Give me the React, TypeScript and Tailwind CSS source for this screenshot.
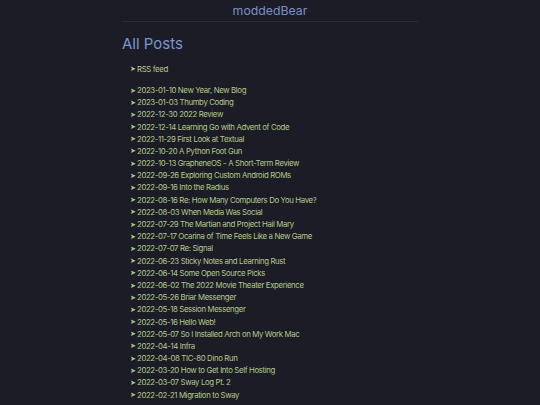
const posts = [
  '2023-01-10 New Year, New Blog',
  '2023-01-03 Thumby Coding',
  '2022-12-30 2022 Review',
  '2022-12-14 Learning Go with Advent of Code',
  '2022-11-29 First Look at Textual',
  '2022-10-20 A Python Foot Gun',
  '2022-10-13 GrapheneOS - A Short-Term Review',
  '2022-09-26 Exploring Custom Android ROMs',
  '2022-09-16 Into the Radius',
  '2022-08-16 Re: How Many Computers Do You Have?',
  '2022-08-03 When Media Was Social',
  '2022-07-29 The Martian and Project Hail Mary',
  '2022-07-17 Ocarina of Time Feels Like a New Game',
  '2022-07-07 Re: Signal',
  '2022-06-23 Sticky Notes and Learning Rust',
  '2022-06-14 Some Open Source Picks',
  '2022-06-02 The 2022 Movie Theater Experience',
  '2022-05-26 Briar Messenger',
  '2022-05-18 Session Messenger',
  '2022-05-16 Hello Web!',
  '2022-05-07 So I Installed Arch on My Work Mac',
  '2022-04-14 Infra',
  '2022-04-08 TIC-80 Dino Run',
  '2022-03-20 How to Get Into Self Hosting',
  '2022-03-07 Sway Log Pt. 2',
  '2022-02-21 Migration to Sway',
];

function Item({ text }: { text: string }) {
  return (
    <li className="flex items-center h-[12.2px]">
      <span className="w-[7px] text-[6.5px] leading-none tracking-normal">➤</span>
      <span>{text}</span>
    </li>
  );
}

export default function App() {
  return (
    <div className="min-h-[405px] w-full bg-[#1c1c27] font-['Inter',sans-serif] overflow-hidden">
      <div className="mx-auto w-[296px]">
        <header className="h-[22px] border-b border-[#2a2c3a] flex items-center justify-center">
          <span className="text-[12.3px] text-[#7c8fc4] mt-[2px]">moddedBear</span>
        </header>
        <h1 className="mt-[12px] text-[15px] leading-[20px] text-[#7b95cf]">All Posts</h1>
        <ul className="mt-[9.5px] pl-[8px] text-[7.8px] tracking-[-0.36px] text-[#b2c98a]">
          <Item text="RSS feed" />
        </ul>
        <ul className="mt-[9px] pl-[8px] text-[7.8px] tracking-[-0.36px] text-[#b2c98a]">
          {posts.map((p) => (
            <Item key={p} text={p} />
          ))}
        </ul>
      </div>
    </div>
  );
}
